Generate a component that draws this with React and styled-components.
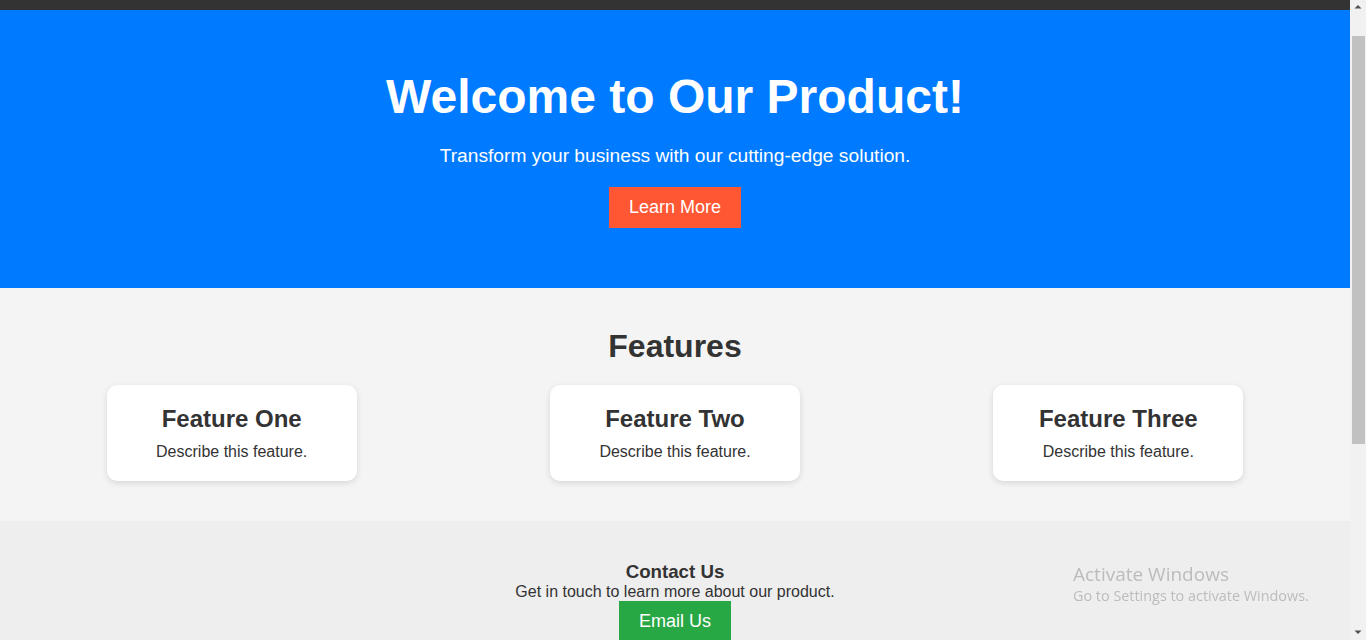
import React from 'react';
import styled, { createGlobalStyle } from 'styled-components';

const GlobalStyle = createGlobalStyle`
  html, body {
    margin: 0;
    padding: 0;
  }
  body {
    font-family: "Liberation Sans", Arial, sans-serif;
    color: #333;
    background: #eee;
  }
`;

const Page = styled.div`
  margin-right: 16px;
`;

const NavBar = styled.nav`
  height: 10px;
  background: #333;
`;

const Hero = styled.header`
  background: #007bff;
  color: #fff;
  text-align: center;
  padding: 60px 20px;
`;

const HeroTitle = styled.h1`
  margin: 0;
  font-size: 48px;
  line-height: 54px;
  font-weight: bold;
`;

const HeroText = styled.p`
  margin: 20px 0;
  font-size: 19.2px;
  line-height: 23px;
`;

const Button = styled.button`
  display: inline-block;
  border: none;
  padding: 10px 20px;
  font-family: inherit;
  font-size: 18px;
  color: #fff;
  background: ${(p) => p.$bg};
  cursor: pointer;
`;

const Features = styled.section`
  background: #f4f4f4;
  padding: 40px 10px;
  text-align: center;
`;

const SectionTitle = styled.h2`
  margin: 0 0 20px;
  font-size: 32px;
  line-height: 37px;
  color: #333;
`;

const CardRow = styled.div`
  display: flex;
  justify-content: space-around;
`;

const Card = styled.div`
  width: 250px;
  box-sizing: border-box;
  padding: 20px;
  background: #fff;
  border-radius: 10px;
  box-shadow: 0 2px 6px rgba(0, 0, 0, 0.12);
`;

const CardTitle = styled.h3`
  margin: 0 0 10px;
  font-size: 24px;
  color: #333;
`;

const CardText = styled.p`
  margin: 0;
  font-size: 16px;
  color: #333;
`;

const Contact = styled.footer`
  background: #eee;
  text-align: center;
  padding: 39px 20px 280px;
`;

const ContactTitle = styled.h3`
  margin: 0;
  font-size: 18.72px;
  line-height: 23px;
  color: #333;
`;

const ContactText = styled.p`
  margin: 0;
  font-size: 16px;
  color: #333;
`;

const Watermark = styled.div`
  position: fixed;
  left: 1073px;
  top: 562px;
  font-family: "Open Sans", "Noto Sans", sans-serif;
  color: #bcbcbc;
  pointer-events: none;
`;

const WatermarkTitle = styled.div`
  font-size: 19px;
  line-height: 24px;
`;

const WatermarkText = styled.div`
  font-size: 14.4px;
  line-height: 20px;
`;

const Scrollbar = styled.div`
  position: fixed;
  top: 0;
  right: 0;
  bottom: 0;
  width: 16px;
  background: #f1f1f1;
  display: flex;
  flex-direction: column;
  align-items: center;
`;

const Arrow = styled.svg`
  display: block;
  flex: none;
`;

const Track = styled.div`
  flex: 1;
  width: 100%;
  padding-top: 20px;
`;

const Thumb = styled.div`
  margin: 0 auto;
  width: 13px;
  height: 408px;
  background: #c1c1c1;
`;

const features = ['Feature One', 'Feature Two', 'Feature Three'];

const App = () => (
  <>
    <GlobalStyle />
    <Page>
      <NavBar />
      <Hero>
        <HeroTitle>Welcome to Our Product!</HeroTitle>
        <HeroText>Transform your business with our cutting-edge solution.</HeroText>
        <Button $bg="#ff5733">Learn More</Button>
      </Hero>
      <Features>
        <SectionTitle>Features</SectionTitle>
        <CardRow>
          {features.map((f) => (
            <Card key={f}>
              <CardTitle>{f}</CardTitle>
              <CardText>Describe this feature.</CardText>
            </Card>
          ))}
        </CardRow>
      </Features>
      <Contact>
        <ContactTitle>Contact Us</ContactTitle>
        <ContactText>Get in touch to learn more about our product.</ContactText>
        <Button $bg="#28a745">Email Us</Button>
      </Contact>
    </Page>
    <Watermark>
      <WatermarkTitle>Activate Windows</WatermarkTitle>
      <WatermarkText>Go to Settings to activate Windows.</WatermarkText>
    </Watermark>
    <Scrollbar>
      <Arrow width="16" height="16" viewBox="0 0 16 16">
        <path d="M4.5 8.5 L8 5 L11.5 8.5 Z" fill="#505050" />
      </Arrow>
      <Track>
        <Thumb />
      </Track>
      <Arrow width="16" height="16" viewBox="0 0 16 16">
        <path d="M4.5 6.5 L8 10 L11.5 6.5 Z" fill="#505050" />
      </Arrow>
    </Scrollbar>
  </>
);

export default App;
